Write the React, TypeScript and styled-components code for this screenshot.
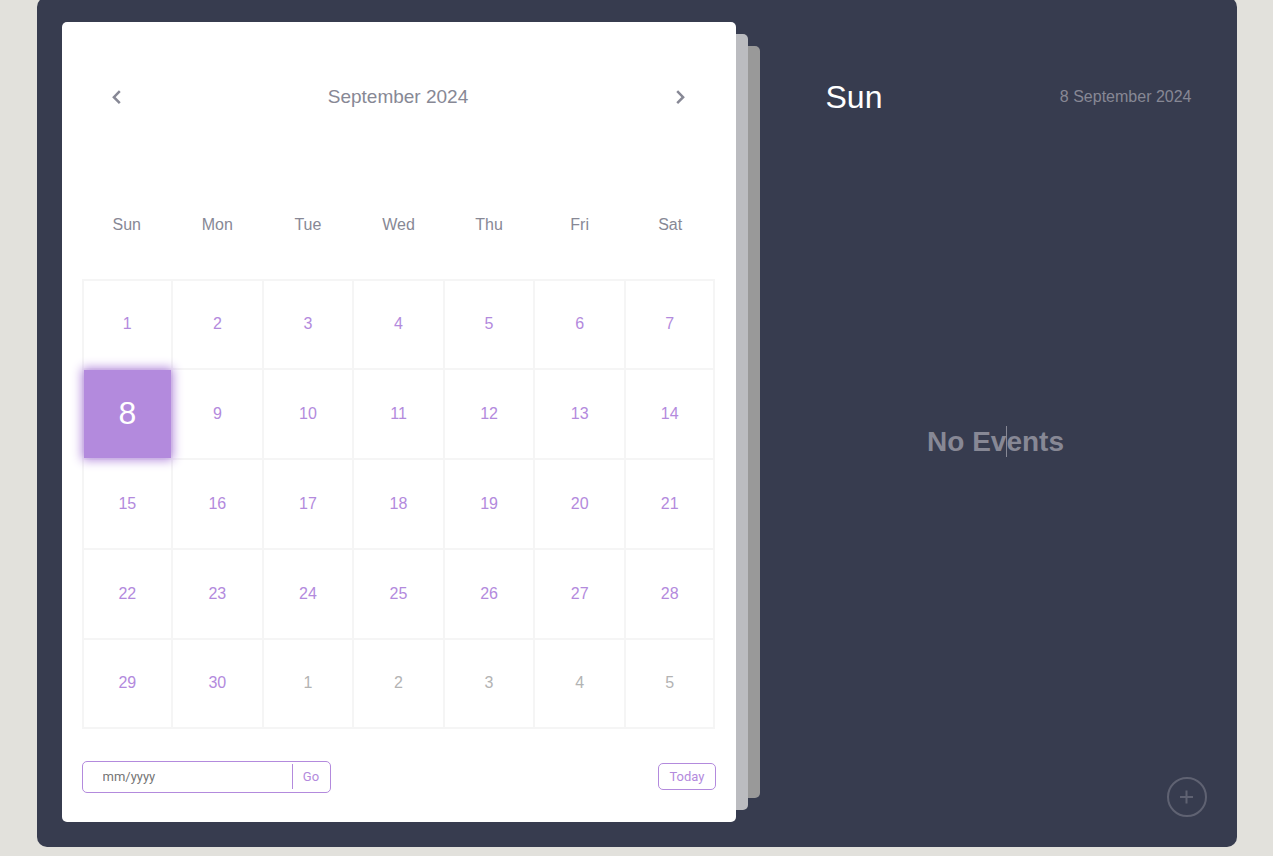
import React from "react";
import styled, { createGlobalStyle, css } from "styled-components";

const purple = "#b38add";
const muted = "#878895";
const line = "#f5f5f5";

const GlobalStyle = createGlobalStyle`
  * { box-sizing: border-box; margin: 0; padding: 0; }
  body {
    margin: 0;
    background: #e2e1dc;
    font-family: "Liberation Sans", Arial, sans-serif;
    font-size: 16px;
    overflow: hidden;
  }
  button, input { font: 13px Roboto, sans-serif; background: none; border: none; outline: none; }
  button { cursor: pointer; }
`;

const Container = styled.main`
  position: relative;
  display: flex;
  max-width: 1200px;
  min-height: 850px;
  margin: -3px auto 0;
  padding: 5px;
  border-radius: 10px;
  background: #373c4f;
`;

const Left = styled.section`
  width: 60%;
  padding: 20px;
`;

const Calendar = styled.div`
  position: relative;
  display: flex;
  flex-direction: column;
  min-height: 800px;
  padding: 0 20px;
  border-radius: 5px;
  background: #fff;

  &::before,
  &::after {
    content: "";
    position: absolute;
    width: 12px;
    border-radius: 0 5px 5px 0;
  }
  &::before {
    top: 12px;
    bottom: 12px;
    left: 100%;
    background: #bbbcc0;
  }
  &::after {
    top: 24px;
    bottom: 24px;
    left: calc(100% + 12px);
    background: #999;
  }
`;

const MonthBar = styled.header`
  display: flex;
  align-items: center;
  justify-content: space-between;
  height: 150px;
  padding: 0 31px 0 30px;
  color: ${muted};
`;

const MonthName = styled.h1`
  font-size: 19px;
  font-weight: 400;
`;

const ArrowButton = styled.button`
  display: flex;
  color: ${muted};
`;

const Icon = styled.svg`
  display: block;
  fill: none;
  stroke: currentColor;
`;

const Weekdays = styled.div`
  display: grid;
  grid-template-columns: repeat(7, 1fr);
  align-items: center;
  height: 107px;
  padding-bottom: 2px;
  color: ${muted};
  text-align: center;
`;

const Days = styled.div`
  display: grid;
  grid-template-columns: repeat(7, 1fr);
  grid-auto-rows: 90px;
`;

const DayFace = styled.span`
  display: flex;
  align-items: center;
  justify-content: center;
  width: 100%;
  height: 100%;
  padding-bottom: 1px;
`;

const Day = styled.button<{ $outside: boolean; $active: boolean }>`
  border: 1px solid ${line};
  color: ${(p) => (p.$outside ? "#b3b3b3" : purple)};
  font-family: "Liberation Sans", Arial, sans-serif;
  font-size: 16px;

  &:nth-child(7n + 1) { border-left-width: 2px; }
  &:nth-child(7n) { border-right-width: 2px; }
  &:nth-child(-n + 7) { border-top-width: 2px; }
  &:nth-child(n + 29) { border-bottom-width: 2px; }

  ${(p) =>
    p.$active &&
    css`
      position: relative;
      z-index: 1;
      color: #fff;
      font-size: 32px;
      ${DayFace} {
        background: ${purple};
        box-shadow: 0 0 10px 2px ${purple};
        padding-bottom: 2px;
      }
    `}
`;

const Footer = styled.footer`
  display: flex;
  align-items: center;
  justify-content: space-between;
  padding-top: 32px;
`;

const GotoForm = styled.form`
  display: flex;
  align-items: center;
  height: 32px;
  border: 1px solid ${purple};
  border-radius: 5px;
`;

const GotoInput = styled.input`
  width: 209px;
  height: 30px;
  padding: 0 20px 2px;
  color: ${purple};
  &::placeholder { color: #757575; }
`;

const GoButton = styled.button`
  width: 38px;
  height: 25px;
  margin-bottom: 1px;
  border-left: 1px solid ${purple};
  color: ${purple};
`;

const TodayButton = styled.button`
  height: 27px;
  margin-bottom: 1px;
  padding: 0 10px;
  border: 1px solid ${purple};
  border-radius: 5px;
  color: ${purple};
`;

const Right = styled.section`
  display: flex;
  flex-direction: column;
  width: 40%;
  padding: 20px 0;
`;

const TodayBar = styled.header`
  display: flex;
  align-items: center;
  justify-content: space-between;
  height: 150px;
  padding: 0 40px 0 70px;
`;

const Weekday = styled.h2`
  color: #fff;
  font-size: 32px;
  font-weight: 400;
`;

const FullDate = styled.p`
  color: ${muted};
`;

const Events = styled.div`
  display: flex;
  align-items: center;
  justify-content: center;
  height: 540px;
  padding-left: 4px;
`;

const NoEvents = styled.h3`
  color: ${muted};
  font-size: 28px;
`;

const Caret = styled.span`
  position: relative;
  &::after {
    content: "";
    position: absolute;
    top: 0;
    left: 0;
    width: 1px;
    height: 31px;
    background: ${muted};
  }
`;

const AddButton = styled.button`
  position: absolute;
  right: 30px;
  bottom: 30px;
  display: flex;
  align-items: center;
  justify-content: center;
  width: 40px;
  height: 40px;
  border: 2px solid ${muted};
  border-radius: 50%;
  color: ${muted};
  opacity: 0.5;
`;

const weekdays = ["Sun", "Mon", "Tue", "Wed", "Thu", "Fri", "Sat"];
const days = Array.from({ length: 35 }, (_, i) => ({
  number: i < 30 ? i + 1 : i - 29,
  outside: i >= 30,
}));

export default function App() {
  return (
    <>
      <GlobalStyle />
      <Container>
        <Left>
          <Calendar>
            <MonthBar>
              <ArrowButton aria-label="Previous month">
                <Icon width="9" height="15" viewBox="0 0 9 15" strokeWidth="2.5">
                  <polyline points="7.8,1.2 1.9,7.2 7.8,13.2" />
                </Icon>
              </ArrowButton>
              <MonthName>September 2024</MonthName>
              <ArrowButton aria-label="Next month">
                <Icon width="9" height="15" viewBox="0 0 9 15" strokeWidth="2.5">
                  <polyline points="1.2,1.2 7.1,7.2 1.2,13.2" />
                </Icon>
              </ArrowButton>
            </MonthBar>
            <Weekdays>
              {weekdays.map((name) => <div key={name}>{name}</div>)}
            </Weekdays>
            <Days>
              {days.map((day, i) => (
                <Day key={i} $outside={day.outside} $active={i === 7}>
                  <DayFace>{day.number}</DayFace>
                </Day>
              ))}
            </Days>
            <Footer>
              <GotoForm onSubmit={(e) => e.preventDefault()}>
                <GotoInput type="text" placeholder="mm/yyyy" aria-label="Go to month" />
                <GoButton type="submit">Go</GoButton>
              </GotoForm>
              <TodayButton type="button">Today</TodayButton>
            </Footer>
          </Calendar>
        </Left>
        <Right>
          <TodayBar>
            <Weekday>Sun</Weekday>
            <FullDate>8 September 2024</FullDate>
          </TodayBar>
          <Events>
            <NoEvents>No Ev<Caret />ents</NoEvents>
          </Events>
        </Right>
        <AddButton aria-label="Add event">
          <Icon width="14" height="14" viewBox="0 0 14 14" strokeWidth="2">
            <path d="M6.5 0.5V13.5M0 7H13" />
          </Icon>
        </AddButton>
      </Container>
    </>
  );
}
